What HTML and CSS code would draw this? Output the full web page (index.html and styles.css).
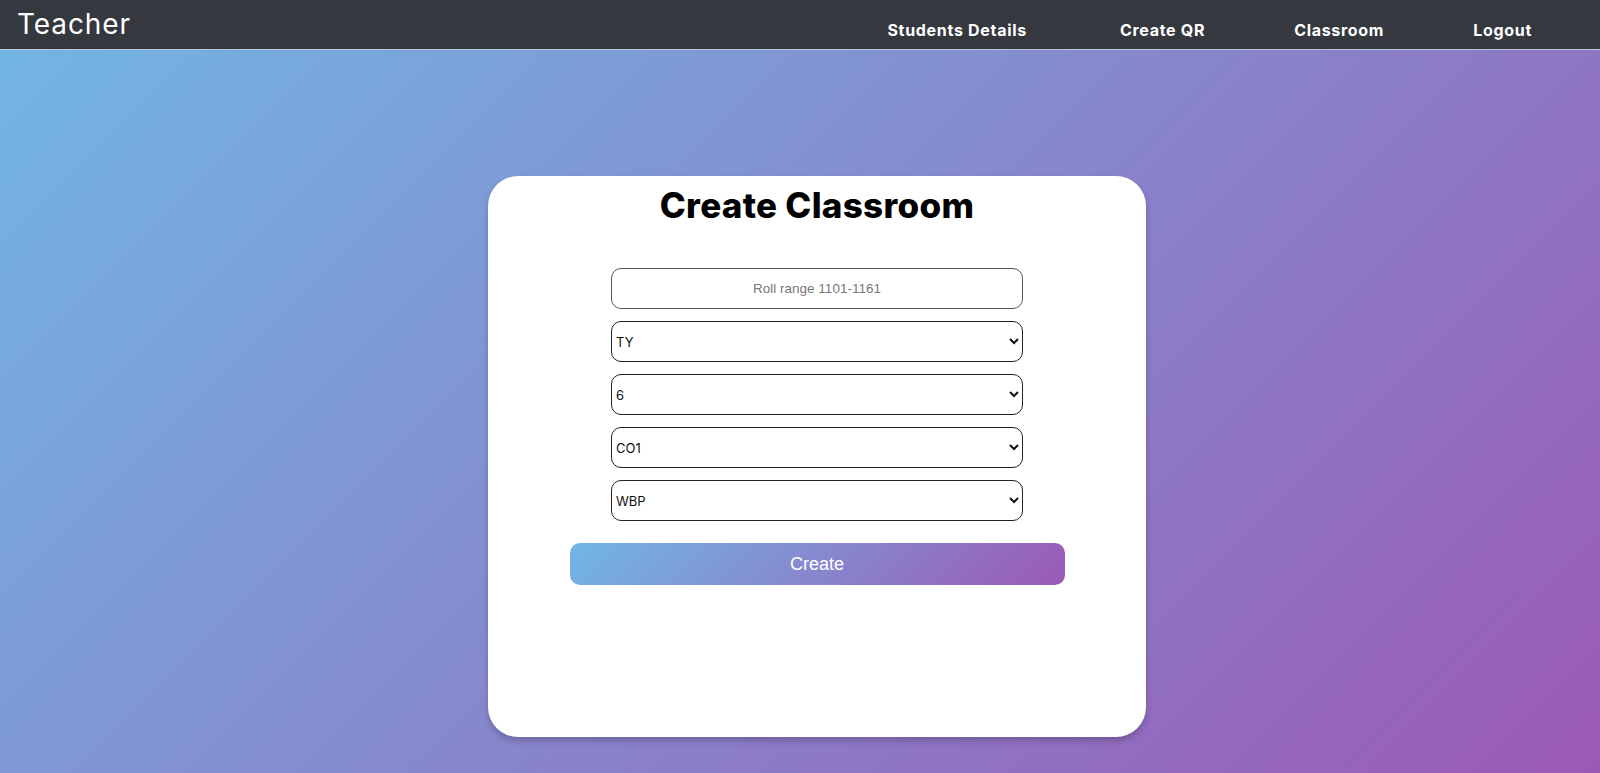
FILE: index.html
```html
<!DOCTYPE html>
<html lang="en">
<head>
<meta charset="utf-8">
<title>Teacher - Create Classroom</title>
<link rel="stylesheet" href="styles.css">
</head>
<body>
  <nav class="navbar">
    <div class="brand">Teacher</div>
    <ul class="nav-links">
      <li><a href="#">Students Details</a></li>
      <li><a href="#">Create QR</a></li>
      <li><a href="#">Classroom</a></li>
      <li><a href="#">Logout</a></li>
    </ul>
  </nav>
  <main class="main">
    <section class="card">
      <h1 class="title">Create Classroom</h1>
      <form class="form">
        <div class="fields">
          <input class="field field-input" type="text" placeholder="Roll range 1101-1161">
          <select class="field field-select">
            <option>TY</option>
            <option>SY</option>
            <option>FY</option>
          </select>
          <select class="field field-select">
            <option>6</option>
            <option>5</option>
          </select>
          <select class="field field-select">
            <option>CO1</option>
            <option>CO2</option>
          </select>
          <select class="field field-select">
            <option>WBP</option>
            <option>PWP</option>
          </select>
        </div>
        <button class="btn" type="button">Create</button>
      </form>
    </section>
  </main>
</body>
</html>
```
FILE: styles.css
```css
* { box-sizing: border-box; }
html, body { margin: 0; padding: 0; height: 100%; }
body {
  font-family: "Inter", "Noto Sans", sans-serif;
  background: linear-gradient(135deg, #71b7e6, #9b59b6);
  min-height: 773px;
  overflow: hidden;
}
.navbar {
  height: 50px;
  background: #36383f;
  border-bottom: 1px solid #b9c6da;
  display: flex;
  align-items: center;
  justify-content: space-between;
  padding: 0 68px 0 17px;
}
.brand {
  color: #fff;
  font-size: 28px;
  font-weight: 400;
  letter-spacing: 0.9px;
  margin-top: -2px;
}
.nav-links {
  list-style: none;
  margin: 0;
  padding: 0;
  display: flex;
  gap: 89px;
  margin-top: 11px;
}
.nav-links li:first-child { margin-right: 4px; }
.nav-links a {
  color: #fff;
  text-decoration: none;
  font-weight: 700;
  font-size: 16px;
  letter-spacing: 0.7px;
}
.main {
  display: flex;
  justify-content: center;
  padding: 126px 0 0 34px;
}
.card {
  width: 658px;
  height: 561px;
  background: #fff;
  border-radius: 30px;
  box-shadow: 0 4px 6px rgba(0, 0, 0, 0.2);
  display: flex;
  flex-direction: column;
  align-items: center;
  padding-top: 8px;
}
.title {
  margin: 0;
  font-size: 35px;
  font-weight: 800;
  color: #000;
  line-height: 42px;
  letter-spacing: 0.3px;
}
.form {
  margin-top: 42px;
  display: flex;
  flex-direction: column;
  align-items: center;
}
.fields {
  display: flex;
  flex-direction: column;
  gap: 12px;
  width: 412px;
}
.field {
  width: 412px;
  height: 41px;
  border-radius: 10px;
  background: #fff;
  outline: none;
}
.field-input {
  border: 1px solid #555;
  text-align: center;
  font-family: "Liberation Sans", Arial, sans-serif;
  font-size: 13.5px;
  color: #333;
}
.field-input::placeholder { color: #777; }
.field-select {
  border: 1px solid #222;
  font-family: "Inter", "Noto Sans", sans-serif;
  font-size: 13px;
  color: #111;
  padding: 0 6px 0 0;
}
.btn {
  margin-top: 22px;
  width: 495px;
  height: 42px;
  border: none;
  border-radius: 10px;
  background: linear-gradient(135deg, #71b7e6, #9b59b6);
  color: #fff;
  font-family: "Liberation Sans", Arial, sans-serif;
  font-size: 18px;
  cursor: pointer;
}
```
